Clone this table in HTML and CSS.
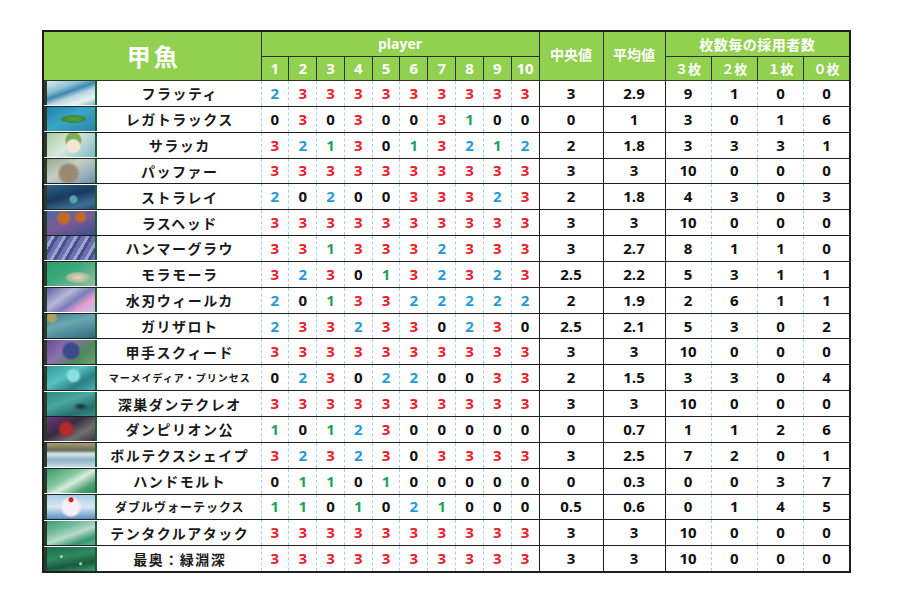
FILE: index.html
```html
<!DOCTYPE html>
<html lang="ja">
<head>
<meta charset="utf-8">
<title>甲魚</title>
<link rel="stylesheet" href="styles.css">
</head>
<body>
<div class="wrap">
<table class="sheet">
<colgroup>
<col class="w-img"><col class="w-name">
<col class="w-p"><col class="w-p"><col class="w-p"><col class="w-p"><col class="w-p"><col class="w-p"><col class="w-p"><col class="w-p"><col class="w-p"><col class="w-p">
<col class="w-med"><col class="w-avg">
<col class="w-c"><col class="w-c"><col class="w-c"><col class="w-c">
</colgroup>
<thead>
<tr class="h1">
<th class="title" colspan="2" rowspan="2">甲魚</th>
<th class="player-h" colspan="10">player</th>
<th class="stat-h" rowspan="2">中央値</th>
<th class="stat-h" rowspan="2">平均値</th>
<th class="cnt-top" colspan="4">枚数毎の採用者数</th>
</tr>
<tr class="h2">
<th class="num-h">1</th><th class="num-h">2</th><th class="num-h">3</th><th class="num-h">4</th><th class="num-h">5</th><th class="num-h">6</th><th class="num-h">7</th><th class="num-h">8</th><th class="num-h">9</th><th class="num-h">10</th>
<th class="cnt-h">３枚</th><th class="cnt-h">２枚</th><th class="cnt-h">１枚</th><th class="cnt-h">０枚</th>
</tr>
</thead>
<tbody>
<tr><td class="img"><div class="thumb t1"></div></td><td class="name">フラッティ</td>
<td class="p v2">2</td><td class="p v3">3</td><td class="p v3">3</td><td class="p v3">3</td><td class="p v3">3</td><td class="p v3">3</td><td class="p v3">3</td><td class="p v3">3</td><td class="p v3">3</td><td class="p v3">3</td>
<td class="med">3</td><td class="avg">2.9</td><td class="c first">9</td><td class="c">1</td><td class="c">0</td><td class="c">0</td></tr>

<tr><td class="img"><div class="thumb t2"></div></td><td class="name">レガトラックス</td>
<td class="p v0">0</td><td class="p v3">3</td><td class="p v0">0</td><td class="p v3">3</td><td class="p v0">0</td><td class="p v0">0</td><td class="p v3">3</td><td class="p v1">1</td><td class="p v0">0</td><td class="p v0">0</td>
<td class="med">0</td><td class="avg">1</td><td class="c first">3</td><td class="c">0</td><td class="c">1</td><td class="c">6</td></tr>

<tr><td class="img"><div class="thumb t3"></div></td><td class="name">サラッカ</td>
<td class="p v3">3</td><td class="p v2">2</td><td class="p v1">1</td><td class="p v3">3</td><td class="p v0">0</td><td class="p v1">1</td><td class="p v3">3</td><td class="p v2">2</td><td class="p v1">1</td><td class="p v2">2</td>
<td class="med">2</td><td class="avg">1.8</td><td class="c first">3</td><td class="c">3</td><td class="c">3</td><td class="c">1</td></tr>

<tr><td class="img"><div class="thumb t4"></div></td><td class="name">パッファー</td>
<td class="p v3">3</td><td class="p v3">3</td><td class="p v3">3</td><td class="p v3">3</td><td class="p v3">3</td><td class="p v3">3</td><td class="p v3">3</td><td class="p v3">3</td><td class="p v3">3</td><td class="p v3">3</td>
<td class="med">3</td><td class="avg">3</td><td class="c first">10</td><td class="c">0</td><td class="c">0</td><td class="c">0</td></tr>

<tr><td class="img"><div class="thumb t5"></div></td><td class="name">ストラレイ</td>
<td class="p v2">2</td><td class="p v0">0</td><td class="p v2">2</td><td class="p v0">0</td><td class="p v0">0</td><td class="p v3">3</td><td class="p v3">3</td><td class="p v3">3</td><td class="p v2">2</td><td class="p v3">3</td>
<td class="med">2</td><td class="avg">1.8</td><td class="c first">4</td><td class="c">3</td><td class="c">0</td><td class="c">3</td></tr>

<tr><td class="img"><div class="thumb t6"></div></td><td class="name">ラスヘッド</td>
<td class="p v3">3</td><td class="p v3">3</td><td class="p v3">3</td><td class="p v3">3</td><td class="p v3">3</td><td class="p v3">3</td><td class="p v3">3</td><td class="p v3">3</td><td class="p v3">3</td><td class="p v3">3</td>
<td class="med">3</td><td class="avg">3</td><td class="c first">10</td><td class="c">0</td><td class="c">0</td><td class="c">0</td></tr>

<tr><td class="img"><div class="thumb t7"></div></td><td class="name">ハンマーグラウ</td>
<td class="p v3">3</td><td class="p v3">3</td><td class="p v1">1</td><td class="p v3">3</td><td class="p v3">3</td><td class="p v3">3</td><td class="p v2">2</td><td class="p v3">3</td><td class="p v3">3</td><td class="p v3">3</td>
<td class="med">3</td><td class="avg">2.7</td><td class="c first">8</td><td class="c">1</td><td class="c">1</td><td class="c">0</td></tr>

<tr><td class="img"><div class="thumb t8"></div></td><td class="name">モラモーラ</td>
<td class="p v3">3</td><td class="p v2">2</td><td class="p v3">3</td><td class="p v0">0</td><td class="p v1">1</td><td class="p v3">3</td><td class="p v2">2</td><td class="p v3">3</td><td class="p v2">2</td><td class="p v3">3</td>
<td class="med">2.5</td><td class="avg">2.2</td><td class="c first">5</td><td class="c">3</td><td class="c">1</td><td class="c">1</td></tr>

<tr><td class="img"><div class="thumb t9"></div></td><td class="name">水刃ウィールカ</td>
<td class="p v2">2</td><td class="p v0">0</td><td class="p v1">1</td><td class="p v3">3</td><td class="p v3">3</td><td class="p v2">2</td><td class="p v2">2</td><td class="p v2">2</td><td class="p v2">2</td><td class="p v2">2</td>
<td class="med">2</td><td class="avg">1.9</td><td class="c first">2</td><td class="c">6</td><td class="c">1</td><td class="c">1</td></tr>

<tr><td class="img"><div class="thumb t10"></div></td><td class="name">ガリザロト</td>
<td class="p v2">2</td><td class="p v3">3</td><td class="p v3">3</td><td class="p v2">2</td><td class="p v3">3</td><td class="p v3">3</td><td class="p v0">0</td><td class="p v2">2</td><td class="p v3">3</td><td class="p v0">0</td>
<td class="med">2.5</td><td class="avg">2.1</td><td class="c first">5</td><td class="c">3</td><td class="c">0</td><td class="c">2</td></tr>

<tr><td class="img"><div class="thumb t11"></div></td><td class="name">甲手スクィード</td>
<td class="p v3">3</td><td class="p v3">3</td><td class="p v3">3</td><td class="p v3">3</td><td class="p v3">3</td><td class="p v3">3</td><td class="p v3">3</td><td class="p v3">3</td><td class="p v3">3</td><td class="p v3">3</td>
<td class="med">3</td><td class="avg">3</td><td class="c first">10</td><td class="c">0</td><td class="c">0</td><td class="c">0</td></tr>

<tr><td class="img"><div class="thumb t12"></div></td><td class="name name-xs">マーメイディア・プリンセス</td>
<td class="p v0">0</td><td class="p v2">2</td><td class="p v3">3</td><td class="p v0">0</td><td class="p v2">2</td><td class="p v2">2</td><td class="p v0">0</td><td class="p v0">0</td><td class="p v3">3</td><td class="p v3">3</td>
<td class="med">2</td><td class="avg">1.5</td><td class="c first">3</td><td class="c">3</td><td class="c">0</td><td class="c">4</td></tr>

<tr><td class="img"><div class="thumb t13"></div></td><td class="name">深巣ダンテクレオ</td>
<td class="p v3">3</td><td class="p v3">3</td><td class="p v3">3</td><td class="p v3">3</td><td class="p v3">3</td><td class="p v3">3</td><td class="p v3">3</td><td class="p v3">3</td><td class="p v3">3</td><td class="p v3">3</td>
<td class="med">3</td><td class="avg">3</td><td class="c first">10</td><td class="c">0</td><td class="c">0</td><td class="c">0</td></tr>

<tr><td class="img"><div class="thumb t14"></div></td><td class="name">ダンピリオン公</td>
<td class="p v1">1</td><td class="p v0">0</td><td class="p v1">1</td><td class="p v2">2</td><td class="p v3">3</td><td class="p v0">0</td><td class="p v0">0</td><td class="p v0">0</td><td class="p v0">0</td><td class="p v0">0</td>
<td class="med">0</td><td class="avg">0.7</td><td class="c first">1</td><td class="c">1</td><td class="c">2</td><td class="c">6</td></tr>

<tr><td class="img"><div class="thumb t15"></div></td><td class="name">ボルテクスシェイプ</td>
<td class="p v3">3</td><td class="p v2">2</td><td class="p v3">3</td><td class="p v2">2</td><td class="p v3">3</td><td class="p v0">0</td><td class="p v3">3</td><td class="p v3">3</td><td class="p v3">3</td><td class="p v3">3</td>
<td class="med">3</td><td class="avg">2.5</td><td class="c first">7</td><td class="c">2</td><td class="c">0</td><td class="c">1</td></tr>

<tr><td class="img"><div class="thumb t16"></div></td><td class="name">ハンドモルト</td>
<td class="p v0">0</td><td class="p v1">1</td><td class="p v1">1</td><td class="p v0">0</td><td class="p v1">1</td><td class="p v0">0</td><td class="p v0">0</td><td class="p v0">0</td><td class="p v0">0</td><td class="p v0">0</td>
<td class="med">0</td><td class="avg">0.3</td><td class="c first">0</td><td class="c">0</td><td class="c">3</td><td class="c">7</td></tr>

<tr><td class="img"><div class="thumb t17"></div></td><td class="name name-s">ダブルヴォーテックス</td>
<td class="p v1">1</td><td class="p v1">1</td><td class="p v0">0</td><td class="p v1">1</td><td class="p v0">0</td><td class="p v2">2</td><td class="p v1">1</td><td class="p v0">0</td><td class="p v0">0</td><td class="p v0">0</td>
<td class="med">0.5</td><td class="avg">0.6</td><td class="c first">0</td><td class="c">1</td><td class="c">4</td><td class="c">5</td></tr>

<tr><td class="img"><div class="thumb t18"></div></td><td class="name">テンタクルアタック</td>
<td class="p v3">3</td><td class="p v3">3</td><td class="p v3">3</td><td class="p v3">3</td><td class="p v3">3</td><td class="p v3">3</td><td class="p v3">3</td><td class="p v3">3</td><td class="p v3">3</td><td class="p v3">3</td>
<td class="med">3</td><td class="avg">3</td><td class="c first">10</td><td class="c">0</td><td class="c">0</td><td class="c">0</td></tr>

<tr><td class="img"><div class="thumb t19"></div></td><td class="name">最奥：緑淵深</td>
<td class="p v3">3</td><td class="p v3">3</td><td class="p v3">3</td><td class="p v3">3</td><td class="p v3">3</td><td class="p v3">3</td><td class="p v3">3</td><td class="p v3">3</td><td class="p v3">3</td><td class="p v3">3</td>
<td class="med">3</td><td class="avg">3</td><td class="c first">10</td><td class="c">0</td><td class="c">0</td><td class="c">0</td></tr>
</tbody>
</table>
</div>
</body>
</html>
```
FILE: styles.css
```css
html, body {
  margin: 0;
  background: #ffffff;
}
body {
  font-family: "Noto Sans CJK JP", "Noto Sans", sans-serif;
  color: #111;
}
.wrap {
  padding: 30px 0 0 42px;
}
.sheet {
  border-collapse: collapse;
  table-layout: fixed;
  width: 808px;
  border: 2px solid #1e1e1e;
}
.w-img { width: 56px; }
.w-name { width: 162px; }
.w-p { width: 27.8px; }
.w-med { width: 64px; }
.w-avg { width: 62px; }
.w-c { width: 46.25px; }

th {
  background: #92d050;
  color: #ffffff;
  font-weight: 700;
  border: 1px solid #2a3324;
  padding: 0;
  line-height: 1;
  white-space: nowrap;
}
.h1 th { height: 24px; }
.h2 th { height: 23px; }
.title {
  font-size: 24px;
  letter-spacing: 3px;
  padding-left: 3px;
}
.player-h {
  font-family: "Open Sans", sans-serif;
  font-size: 14px;
}
.num-h {
  font-family: "Open Sans", sans-serif;
  font-size: 15px;
}
.stat-h {
  font-size: 14px;
  padding-bottom: 4px;
}
.cnt-top {
  font-size: 14px;
  letter-spacing: 0.5px;
}
.cnt-h {
  font-size: 13px;
}

td {
  padding: 0;
  height: 24.85px;
  border-bottom: 1px solid #1e1e1e;
  text-align: center;
  font-weight: 700;
  line-height: 1;
  white-space: nowrap;
}
td.img {
  padding: 0 2px 0 0;
}
.thumb {
  height: 24px;
  box-sizing: border-box;
  border-left: 3px solid #2c3a2a;
  border-right: 2px solid #1e5a2c;
}
td.name {
  font-size: 14px;
  letter-spacing: 1.5px;
  color: #1a1a1a;
}
td.name-s {
  font-size: 12px;
  letter-spacing: 1px;
}
td.name-xs {
  font-size: 10px;
  letter-spacing: 1px;
}
td.p {
  border-left: 1px dashed #a9cfea;
  font-family: "Open Sans", sans-serif;
  font-size: 15px;
}
td.med, td.avg {
  border-left: 1px solid #1e1e1e;
  font-family: "Open Sans", sans-serif;
  font-size: 15px;
  color: #111;
}
td.c {
  border-left: 1px dashed #a9cfea;
  font-family: "Open Sans", sans-serif;
  font-size: 15px;
  color: #111;
}
td.c.first {
  border-left: 1px solid #1e1e1e;
}
.v3 { color: #e8202c; }
.v2 { color: #1f9ade; }
.v1 { color: #19a35a; }
.v0 { color: #111111; }

/* card art thumbnails */
.t1 { background: linear-gradient(160deg, #dcecf2 0%, #8cc0d6 30%, #3f87ad 45%, #b6d7e4 60%, #e8f2f4 80%, #7fb3c6 100%); }
.t2 { background: radial-gradient(ellipse 20px 6px at 55% 50%, #4fa04a 0%, #3c8a3c 60%, transparent 70%), linear-gradient(150deg, #1f7fb3 0%, #38a6c8 45%, #2b86a8 100%); }
.t3 { background: radial-gradient(circle at 55% 55%, #f0e6d6 0 6px, transparent 8px), radial-gradient(circle at 55% 30%, #7fae58 0 7px, transparent 9px), linear-gradient(135deg, #a8cfa0 0%, #d8e8dc 45%, #7fb8c8 100%); }
.t4 { background: radial-gradient(circle at 45% 60%, #9a8a74 0 8px, transparent 12px), linear-gradient(150deg, #8fa890 0%, #c8d0c0 40%, #9fb4c0 70%, #6f8ca0 100%); }
.t5 { background: radial-gradient(circle at 55% 60%, #5aa0a8 0 3px, transparent 5px), linear-gradient(165deg, #2f5f88 0%, #1a3a5e 45%, #3d6f95 80%, #274d74 100%); }
.t6 { background: radial-gradient(circle at 35% 30%, #c0692e 0 5px, transparent 8px), radial-gradient(circle at 70% 25%, #c0692e 0 4px, transparent 7px), linear-gradient(160deg, #4a6aa8 0%, #7a5a96 50%, #3a4e8c 100%); }
.t7 { background: repeating-linear-gradient(120deg, #6a70b0 0 4px, #9aa4d0 4px 7px, #4a4f8a 7px 10px); }
.t8 { background: radial-gradient(ellipse 18px 8px at 65% 65%, #d8dcc0 0%, #a8b898 60%, transparent 75%), linear-gradient(150deg, #2aa06a 0%, #3aa878 40%, #8fc0a8 100%); }
.t9 { background: linear-gradient(145deg, #5a62a0 0%, #b8b6d8 35%, #7a7eb8 55%, #e8a0d0 75%, #c0c8e8 100%); }
.t10 { background: radial-gradient(circle at 10% 15%, #b0a060 0 4px, transparent 6px), linear-gradient(165deg, #3e8090 0%, #6aa8b0 40%, #2e6a80 100%); }
.t11 { background: radial-gradient(circle at 50% 45%, #3a4a88 0 7px, transparent 10px), linear-gradient(135deg, #6a4a94 0%, #8a70b0 35%, #4f8a5a 70%, #6aa07a 100%); }
.t12 { background: radial-gradient(circle at 55% 40%, #8ae0e0 0 5px, transparent 8px), linear-gradient(150deg, #2f9a9a 0%, #5ac0c0 40%, #2a7f8a 70%, #4ab0a8 100%); }
.t13 { background: radial-gradient(ellipse 10px 5px at 70% 60%, #1a2a2a 0%, transparent 80%), linear-gradient(160deg, #2e8a84 0%, #4aa8a0 40%, #256e70 75%, #3a9090 100%); }
.t14 { background: radial-gradient(circle at 40% 50%, #b82828 0 5px, transparent 9px), linear-gradient(150deg, #6a3a80 0%, #3a2a40 40%, #707070 70%, #3a3040 100%); }
.t15 { background: linear-gradient(180deg, #a89c70 0%, #6a6a58 30%, #d8e4ec 45%, #8eb4c8 70%, #c8dce8 100%); }
.t16 { background: linear-gradient(150deg, #3a9a6a 0%, #88c8a0 40%, #d8ece0 55%, #4aa070 80%, #2a8a5a 100%); }
.t17 { background: radial-gradient(circle at 50% 20%, #d02020 0 2px, transparent 3px), radial-gradient(circle at 50% 50%, #f6f0f4 0 8px, transparent 11px), linear-gradient(180deg, #a8cce8 0%, #d8e8f4 50%, #5a90c0 100%); }
.t18 { background: linear-gradient(160deg, #3a9a7a 0%, #7cc0a0 35%, #b8dcc8 55%, #3a9478 80%, #5ab08c 100%); }
.t19 { background: radial-gradient(circle at 30% 40%, #9ad8b0 0 1px, transparent 2px), radial-gradient(circle at 70% 70%, #9ad8b0 0 1px, transparent 2px), linear-gradient(170deg, #1e6a48 0%, #2e8a60 40%, #1a5a40 70%, #3a9a70 100%); }
```
